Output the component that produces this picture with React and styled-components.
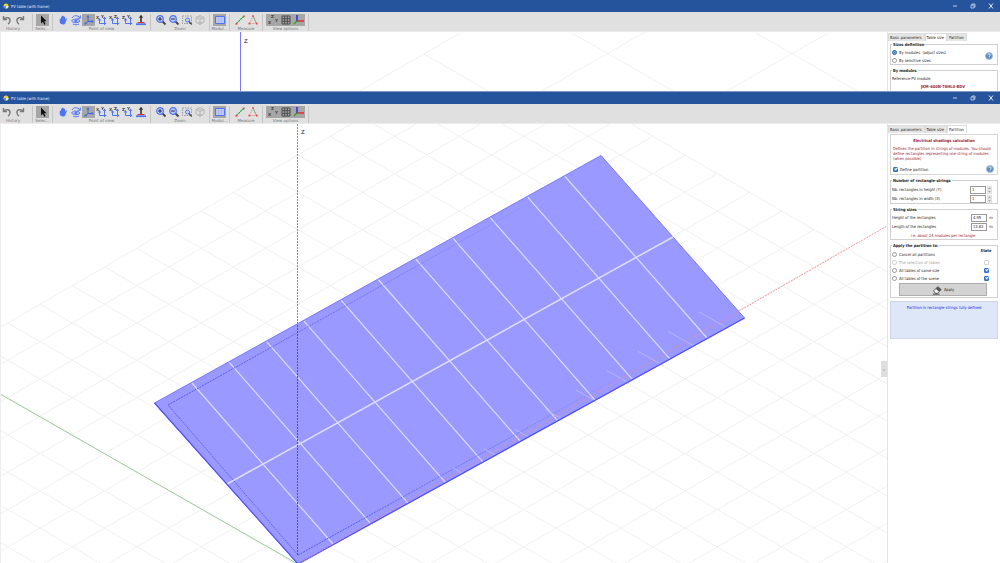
import React from "react";
import styled, { createGlobalStyle } from "styled-components";

const GlobalStyle = createGlobalStyle`
  * { box-sizing: border-box; }
  html, body, #root { height: 100%; }
  body {
    margin: 0;
    background: #fff;
    color: #222;
    font: 4px/5px "DejaVu Sans Condensed", "Liberation Sans", sans-serif;
    text-rendering: geometricPrecision;
  }
  button, input { font: inherit; color: inherit; }
`;

const Desktop = styled.main`
  display: flex;
  flex-direction: column;
  min-height: 100vh;
`;

const Window = styled.section`
  display: flex;
  flex-direction: column;
  flex: ${(p) => (p.$fill ? "1 0 auto" : "none")};
  border-top: ${(p) => (p.$fill ? "1px solid #7f9ac6" : "0")};
`;

const TitleBar = styled.header`
  display: flex;
  align-items: center;
  gap: 2px;
  height: 12px;
  padding: 0 4px 0 3px;
  background: #26549c;
  color: #e6eefb;
`;

const Title = styled.h1`
  flex: 1;
  margin: 0;
  font-size: 4px;
  font-weight: 400;
  line-height: 5px;
`;

const WindowButtons = styled.div`
  display: flex;
  gap: 8px;
`;

const WindowButton = styled.button`
  width: 10px;
  height: 10px;
  padding: 2px;
  border: 0;
  background: none;
  color: #dfe8f8;
  svg { display: block; }
`;

const Toolbar = styled.div`
  display: flex;
  align-items: flex-end;
  height: 20px;
  background: #e0e0e0;
  border-bottom: 1px solid #ececec;
`;

const ToolGroup = styled.div`
  display: flex;
  flex-direction: column;
  align-items: center;
  padding: ${(p) => (p.$flush ? "0 6px 0 0" : "0 3px")};
  border-right: 1px solid #c6c6c6;
  color: #777;
  font-family: "DejaVu Sans", "Liberation Sans", sans-serif;
  white-space: nowrap;
`;

const ToolRow = styled.div`
  display: flex;
`;

const ToolLabel = styled.span`
  width: 0;
  display: flex;
  justify-content: center;
`;

const ToolButton = styled.button`
  width: 13px;
  height: 12px;
  padding: 0;
  border: 0;
  background: ${(p) => (p.$on ? "#a6a6a6" : "transparent")};
  svg { display: block; margin: 0 auto; }
`;

const Body = styled.div`
  display: flex;
  flex: 1;
  min-height: 0;
`;

const Viewport = styled.div`
  position: relative;
  flex: 1;
  min-width: 0;
  overflow: hidden;
  border-left: 1px solid #eee;
`;

const Scene = styled.svg`
  position: absolute;
  inset: 0 0 0 -1px;
  width: calc(100% + 1px);
  height: 100%;
`;

const Splitter = styled.button`
  position: absolute;
  right: 0;
  top: 54%;
  width: 6px;
  height: 16px;
  padding: 0;
  border: 0;
  background: #dedede;
  color: #888;
  line-height: 5px;
`;

const Sidebar = styled.aside`
  width: 113px;
  border-left: 1px solid #e4e4e4;
  padding: 1px 2px 0 0;
`;

const Tabs = styled.div`
  display: flex;
  height: 8px;
`;

const Tab = styled.button`
  padding: 0 2px 0 1px;
  border: 1px solid #dcdcdc;
  border-bottom: 0;
  background: ${(p) => (p.$active ? "#fff" : "#e6e6e6")};
  white-space: nowrap;
  line-height: 5px;
`;

const Page = styled.div`
  display: flex;
  flex-direction: column;
  gap: 3px;
  padding: 1px 0 0 2px;
`;

const Card = styled.div`
  height: 41px;
  padding: 3px 2px 0;
  border: 1px solid #d6d6d6;
  color: #a01c2c;
`;

const CardTitle = styled.h2`
  margin: 0 0 3px;
  font-size: 4px;
  line-height: 5px;
  text-align: center;
`;

const CardText = styled.p`
  margin: 0 0 3px;
`;

const Group = styled.fieldset`
  min-width: 0;
  margin: 0;
  padding: ${(p) => p.$top || 1}px 3px 0 1px;
  border: 1px solid #d0d0d0;
  border-bottom-width: ${(p) => (p.$open ? 0 : 1)}px;
`;

const Legend = styled.legend`
  height: 5px;
  padding: 0 1px;
  color: #222;
  font-weight: 700;
`;

const Row = styled.div`
  display: flex;
  align-items: center;
  justify-content: ${(p) => (p.$center ? "center" : "space-between")};
  height: ${(p) => p.$h || 9}px;
  color: ${(p) => (p.$red ? "#a01c2c" : "inherit")};
  font-weight: ${(p) => (p.$bold ? 700 : 400)};
`;

const Split = styled.div`
  display: flex;
  align-items: ${(p) => (p.$middle ? "center" : "flex-start")};
  justify-content: space-between;
`;

const Choice = styled.label`
  display: flex;
  align-items: center;
  gap: 2px;
  height: ${(p) => p.$h || 8}px;
  color: ${(p) => (p.$off ? "#a4a4a4" : "#222")};
`;

const Radio = styled.input`
  appearance: none;
  width: 5px;
  height: 5px;
  margin: 0;
  border: 1px solid #999;
  border-radius: 50%;
  background: #fff;
  &:checked { border-color: #2b68b5; background: #2b68b5; box-shadow: inset 0 0 0 1px #8db4e2; }
  &:disabled { border-color: #ccc; }
`;

const Check = styled.input`
  appearance: none;
  position: relative;
  width: 5px;
  height: 5px;
  margin: 0;
  border: 1px solid #aaa;
  border-radius: 1px;
  background: #fff;
  &:checked { border-color: #2d6fca; background: #4f8ad8; }
  &:checked::before {
    content: "";
    position: absolute;
    left: 1px;
    top: 0;
    width: 1px;
    height: 2px;
    border: solid #fff;
    border-width: 0 1px 1px 0;
    box-sizing: content-box;
    transform: translateY(-1px) rotate(45deg);
  }
  &:disabled { border-color: #d4d4d4; }
`;

const States = styled.div`
  display: flex;
  flex-direction: column;
  align-items: center;
  width: 16px;
  margin-top: -2px;
`;

const StateTitle = styled.div`
  height: 10px;
  color: #222;
  font-weight: 700;
`;

const StateCell = styled.div`
  display: flex;
  align-items: center;
  height: 8px;
`;

const Field = styled.span`
  display: flex;
  align-items: center;
  gap: 1px;
`;

const NumberBox = styled.input`
  width: 16px;
  height: 8px;
  padding: 0 1px;
  border: 1px solid #999;
  background: #fff;
  line-height: 5px;
`;

const Unit = styled.span`
  width: 6px;
  text-align: center;
`;

const Spin = styled.span`
  display: flex;
  flex-direction: column;
  width: 5px;
  margin-right: 2px;
`;

const SpinButton = styled.button`
  height: 4px;
  padding: 0;
  border: 1px solid #e2e2e2;
  background: #f4f4f4;
  svg { display: block; margin: 0 auto; }
`;

const ApplyButton = styled.button`
  display: flex;
  align-items: center;
  justify-content: center;
  gap: 2px;
  width: calc(100% - 14px);
  height: 13px;
  margin: 1px 7px;
  padding: 0;
  border: 1px solid #adadad;
  background: #d3d3d3;
`;

const Notice = styled.output`
  display: block;
  height: 38px;
  padding-top: 3px;
  border: 1px solid #ccd6e8;
  background: #dde7f8;
  color: #2222dd;
  text-align: center;
`;

const HelpButton = styled.button`
  width: 10px;
  height: 10px;
  padding: 1px;
  border: 0;
  background: none;
  svg { display: block; }
`;

const Icon = ({ children, size = 12 }) => (
  <svg width={size} height={size} viewBox="0 0 12 12" fill="none" aria-hidden="true">
    {children}
  </svg>
);

const BLUE = "#4f74f2";

const viewCorners = (
  <g fill={BLUE}>
    <path d="M3.500 5.500v4h5v-5" fill="none" stroke={BLUE} />
    <path d="M1.800 6.500L3.500 4l1.700 2.500zM6.800 5L8.500 2.500 10.200 5zM8 7.800l2.500 1.700L8 11.200z" />
  </g>
);
const letters = (a, b) => (
  <g fill="#444" fontSize="4" fontWeight="700">
    <text x="0" y="5">{a}</text>
    <text x="5" y="4">{b}</text>
  </g>
);

const icons = {
  undo: <path d="M2.500 2v3.500H6M2.800 5.200C5 2.500 9.500 3.500 9 7c-.2 1.500-1 2.500-2 3" stroke="#777" strokeWidth="1.400" />,
  redo: <path d="M9.500 2v3.500H6M9.200 5.200C7 2.500 2.500 3.500 3 7c.2 1.500 1 2.500 2 3" stroke="#777" strokeWidth="1.400" />,
  select: <path d="M4 1.500v8l1.900-1.700 1.300 2.900 1.300-.6-1.300-2.800h2.400z" fill="#111" />,
  hand: <path d="M4 6V3c0-.8 1-.8 1 0V2c0-.8 1-.8 1 0v.5c0-.8 1-.8 1 0V3c0-.7 1-.7 1 0v2.500l1-1c.7-.4 1 .2.700.8L8.500 8.500C8 10 7.500 10.500 6.200 10.500 4 10.500 3 9.500 2.700 8V5c0-.8 1.300-.8 1.300 0z" fill={BLUE} />,
  orbit: (
    <g stroke={BLUE}>
      <path d="M2 4C3.500 1 8 1 9.800 3.800M10.300 1.500v2.800H7.500M3 10c1.500 1 4 1 6 0" />
      <path d="M1.500 7c2-2.600 6.500-2.600 8.500 0-2 2.300-6.500 2.300-8.500 0z" fill="#c5d0fa" />
      <circle cx="5.800" cy="7" r="1" fill={BLUE} />
    </g>
  ),
  axes: (
    <g fill="#3c63ee">
      <path d="M5 3v4.500h4.500M5 7.500L2.500 9.800" fill="none" stroke="#3c63ee" />
      <path d="M3.500 3.500L5 1l1.500 2.500zM8.500 6L11 7.500 8.500 9zM1.200 10.800l.8-2.800 2 2z" />
    </g>
  ),
  xy: <>{viewCorners}{letters("X", "Y")}</>,
  xz: <>{viewCorners}{letters("X", "Z")}</>,
  zy: <>{viewCorners}{letters("Z", "Y")}</>,
  ground: (
    <>
      <path d="M6 8V3" stroke="#333" strokeWidth="1.600" />
      <path d="M6 .8L3.800 3.800h4.400z" fill="#333" />
      <path d="M2.500 8.500h7" stroke="#d33" />
      <path d="M1 10.200h10" stroke={BLUE} strokeWidth="1.800" />
    </>
  ),
  zoomIn: (
    <>
      <path d="M7 7l3.500 3.500" stroke="#444" strokeWidth="1.800" />
      <circle cx="5" cy="5" r="3.300" fill="#b9c8fb" stroke={BLUE} strokeWidth="1.200" />
      <path d="M3.200 5h3.600M5 3.200v3.600" stroke="#224" />
    </>
  ),
  zoomOut: (
    <>
      <path d="M7 7l3.500 3.500" stroke="#444" strokeWidth="1.800" />
      <circle cx="5" cy="5" r="3.300" fill="#b9c8fb" stroke={BLUE} strokeWidth="1.200" />
      <path d="M3.200 5h3.600" stroke="#224" />
    </>
  ),
  zoomArea: (
    <>
      <path d="M1.500 2h9v7.500h-9z" stroke="#888" strokeWidth=".8" strokeDasharray="1.500 1" />
      <circle cx="6.500" cy="6" r="2" fill="#cdd8fc" stroke={BLUE} />
      <path d="M8 7.500l2.800 3" stroke="#444" strokeWidth="1.200" />
    </>
  ),
  cube: <path d="M6 1.500l4 2v4.500l-4 2.500-4-2.500V3.500zM2 3.500l4 2 4-2M6 5.500v5M4 2.500l4 2M4 9l2-1 2 1" stroke="#b0b0b0" strokeWidth=".9" />,
  module: (
    <>
      <path d="M1.500 2.500h9v7h-9z" fill="#c3cdf8" stroke={BLUE} />
      <path d="M2 4.800h8M2 7.200h8M4.500 3v6M7.500 3v6" stroke="#a3b2f2" strokeWidth=".6" />
    </>
  ),
  distance: (
    <>
      <path d="M2.500 9.500l7-7" stroke="#2a4" strokeWidth="1.200" strokeDasharray="2 .7" />
      <path d="M1.500 9h1.700v1.700H1.500zM9 1.500h1.700v1.700H9z" fill="#e44" />
    </>
  ),
  angle: (
    <>
      <path d="M6 2L2.500 9.500h7z" stroke="#e88" strokeWidth=".8" strokeDasharray="1.500 .7" />
      <path d="M6 2l3.500 7.500" stroke="#5b7" strokeWidth=".8" />
      <path d="M5.200 1.200h1.600v1.600H5.200zM1.500 8.800h1.700v1.600H1.500zM9 8.800h1.700v1.600H9z" fill="#e44" />
    </>
  ),
  labels: (
    <g fill="#444" fontSize="4" fontWeight="700">
      <text x="4" y="4">Z</text>
      <text x="1" y="10">X</text>
      <text x="8" y="8">Y</text>
    </g>
  ),
  grid: <path d="M2 2h8v8H2zM4.700 2v8M7.300 2v8M2 4.700h8M2 7.300h8" stroke="#444" strokeWidth=".9" />,
  triad: (
    <>
      <path d="M4 1v6" stroke="#22e" strokeWidth="1.400" />
      <path d="M4 7h7" stroke="#e22" strokeWidth="1.400" />
      <path d="M4 7l-3 3" stroke="#2a2" strokeWidth="1.400" />
    </>
  ),
};

const toolGroups = [
  { label: "History", flush: true, tools: [["undo", "Undo"], ["redo", "Redo"]] },
  { label: "Selec...", tools: [["select", "Select", true]] },
  {
    label: "Point of view",
    tools: [
      ["hand", "Pan"], ["orbit", "Orbit"], ["axes", "Perspective", true], ["xy", "Top view"],
      ["xz", "Front view"], ["zy", "Side view"], ["ground", "Ground view"],
    ],
  },
  { label: "Zoom", tools: [["zoomIn", "Zoom in"], ["zoomOut", "Zoom out"], ["zoomArea", "Zoom area"], ["cube", "Fit scene"]] },
  { label: "Modul...", tools: [["module", "Modules", true]] },
  { label: "Measure", tools: [["distance", "Distance"], ["angle", "Angle"]] },
  { label: "View options", tools: [["labels", "Axis labels", true], ["grid", "Grid", true], ["triad", "Axes", true]] },
];

const WindowHead = () => (
  <>
    <TitleBar>
      <Icon size={6}>
        <circle cx="6" cy="6" r="5" fill="#f0cf3c" />
        <path d="M6 6h5a5 5 0 0 1-5 5z" fill="#dfe8f8" />
        <path d="M1 6a5 5 0 0 0 5 5V6z" fill="#5d94d8" />
      </Icon>
      <Title>PV table (with frame)</Title>
      <WindowButtons>
        <WindowButton aria-label="Minimize"><Icon size={6}><path d="M2 6h8" stroke="currentColor" strokeWidth="1.600" /></Icon></WindowButton>
        <WindowButton aria-label="Restore"><Icon size={6}><path d="M2 4h6v6H2zM4 4V2h6v6H8" stroke="currentColor" strokeWidth="1.400" /></Icon></WindowButton>
        <WindowButton aria-label="Close"><Icon size={6}><path d="M2 1l8 10M10 1L2 11" stroke="currentColor" strokeWidth="2" /></Icon></WindowButton>
      </WindowButtons>
    </TitleBar>
    <Toolbar role="toolbar">
      {toolGroups.map((g) => (
        <ToolGroup key={g.label} $flush={g.flush}>
          <ToolRow>
            {g.tools.map(([icon, name, on]) => (
              <ToolButton key={icon} aria-label={name} aria-pressed={!!on} $on={on}>
                <Icon>{icons[icon]}</Icon>
              </ToolButton>
            ))}
          </ToolRow>
          <ToolLabel>{g.label}</ToolLabel>
        </ToolGroup>
      ))}
    </Toolbar>
  </>
);

const TabBar = ({ active }) => (
  <Tabs role="tablist">
    {["Basic parameters", "Table size", "Partition"].map((t) => (
      <Tab key={t} role="tab" aria-selected={t === active} $active={t === active}>{t}</Tab>
    ))}
  </Tabs>
);

const Help = () => (
  <HelpButton aria-label="Help">
    <svg width="8" height="8" viewBox="0 0 16 16" aria-hidden="true">
      <circle cx="8" cy="8" r="7" fill="#4f86c6" stroke="#a9bdd6" strokeWidth="2" />
      <path d="M5.500 6.300C5.500 3 10.500 3 10.500 6c0 2-2.500 2-2.500 4M8 11.200v1.600" fill="none" stroke="#fff" strokeWidth="1.800" />
    </svg>
  </HelpButton>
);

const Stepper = () => (
  <Spin>
    <SpinButton aria-label="Increase"><svg width="3" height="2" viewBox="0 0 6 4"><path d="M0 4l3-4 3 4z" fill="#aaa" /></svg></SpinButton>
    <SpinButton aria-label="Decrease"><svg width="3" height="2" viewBox="0 0 6 4"><path d="M0 0l3 4 3-4z" fill="#aaa" /></svg></SpinButton>
  </Spin>
);

/* Isometric ground grid: two families of parallels that start at the far corner. */
const APEX = [491.5, 43];
const STEP = [32.25, 18.66];
const node = (i, j) => `${APEX[0] + (i - j) * STEP[0]} ${APEX[1] + (i + j) * STEP[1]}`;
const groundPath = Array.from({ length: 34 }, (_, k) => `M${node(k, 0)}L${node(k, 34)}M${node(0, k)}L${node(34, k)}`).join("");
const seams = Array.from({ length: 11 }, (_, k) => `M${192 + k * 37.3} ${383 - k * 20.65}L${333 + k * 37.4} ${544 - k * 20.6}`).join("");
const ticks = Array.from({ length: 9 }, (_, k) => ({
  x: 699 - k * 30.75,
  y: 312 + k * 19.5,
  len: k < 3 ? 26 : 26 - k * 2,
}));
const TABLE = "154.500,403 601,155.500 744.500,318 298,564";

const TableScene = () => (
  <Scene viewBox="0 124 887 439" preserveAspectRatio="xMinYMin slice" fill="none" role="img" aria-label="3D view of the table">
    <defs>
      <linearGradient id="fade" gradientUnits="userSpaceOnUse" x1="168" y1="0" x2="560" y2="0">
        <stop offset=".1" stopColor="#5050ee" />
        <stop offset="1" stopColor="#5050ee" stopOpacity="0" />
      </linearGradient>
      <linearGradient id="fadeLow" gradientUnits="userSpaceOnUse" x1="298" y1="0" x2="650" y2="0">
        <stop offset=".1" stopColor="#5050ee" />
        <stop offset="1" stopColor="#5050ee" stopOpacity="0" />
      </linearGradient>
    </defs>
    <path d={groundPath} stroke="#f0f0f0" />
    <path d="M0 394L296 563" stroke="#9ccc9c" />
    <path d="M297.500 124V325" stroke="#7c7cf6" strokeDasharray="2 1" />
    <polygon points={TABLE} fill="#9999ff" stroke="#7a7afb" />
    <path d={seams} stroke="#dcdcff" strokeWidth="1.200" />
    <path d="M227 484L673 237" stroke="#dedeff" strokeWidth="1.500" />
    <path d="M298 555L168 405" stroke="#5c5cee" strokeWidth=".9" strokeDasharray="2 1" />
    <path d="M168 405L560 186" stroke="url(#fade)" strokeWidth=".9" strokeDasharray="2 1" />
    <path d="M298 555L650 360" stroke="url(#fadeLow)" strokeWidth=".9" strokeDasharray="2 1" />
    {ticks.map((t) => (
      <path key={t.x} d={`M${t.x} ${t.y}l${t.len} ${t.len * 0.56}`} stroke="#bcbcf8" strokeWidth=".8" />
    ))}
    <path d="M297.500 325V555" stroke="#4c4cdc" strokeDasharray="2 1" />
    <path d="M154.500 403L298 564L744.500 318" stroke="#5252fa" strokeWidth="1.200" />
    <path d="M298 564L739 311" stroke="#dc8cac" strokeDasharray="2 1" strokeWidth=".8" />
    <path d="M739 311L887 226" stroke="#f79a9a" strokeDasharray="2 1" />
    <text x="301" y="134" fill="#555" fontSize="6" fontFamily="Liberation Sans" fontWeight="700">Z</text>
  </Scene>
);

const TopScene = () => (
  <Scene viewBox="0 32 887 59" preserveAspectRatio="xMinYMin slice" fill="none" role="img" aria-label="3D view">
    <path d="M645 32L540 92M460 33L358 92M424 54L490 92M572 33L675 92M756 33L859 92M828 33L725 92" stroke="#f0f0f0" />
    <path d="M240.500 32V92" stroke="#7a7af8" />
    <text x="244" y="43" fill="#555" fontSize="6" fontFamily="Liberation Sans" fontWeight="700">Z</text>
  </Scene>
);

const applyTargets = [
  { label: "Cancel all partitions" },
  { label: "The selection of tables", off: true, state: false },
  { label: "All tables of same size", state: true },
  { label: "All tables of the scene", state: true },
];

export default function App() {
  return (
    <Desktop>
      <GlobalStyle />
      <Window>
        <WindowHead />
        <Body>
          <Viewport><TopScene /></Viewport>
          <Sidebar>
            <TabBar active="Table size" />
            <Page>
              <Group>
                <Legend>Sizes definition</Legend>
                <Split $middle>
                  <div>
                    <Choice><Radio type="radio" name="sizes" defaultChecked />By modules &nbsp;(adjust sizes)</Choice>
                    <Choice><Radio type="radio" name="sizes" />By sensitive sizes</Choice>
                  </div>
                  <Help />
                </Split>
              </Group>
              <Group $open>
                <Legend>By modules</Legend>
                <Row $h={8}>Reference PV module</Row>
                <Row $center $red $bold>JKM-600N-78HL4-BDV</Row>
              </Group>
            </Page>
          </Sidebar>
        </Body>
      </Window>

      <Window $fill>
        <WindowHead />
        <Body>
          <Viewport>
            <TableScene />
            <Splitter aria-label="Collapse panel">»</Splitter>
          </Viewport>
          <Sidebar>
            <TabBar active="Partition" />
            <Page>
              <Card>
                <CardTitle>Electrical shadings calculation</CardTitle>
                <CardText>
                  Defines the partition in strings of modules. You should define rectangles representing one string of modules (when possible)
                </CardText>
                <Split $middle>
                  <Choice $h={9}><Check type="checkbox" defaultChecked />Define partition</Choice>
                  <Help />
                </Split>
              </Card>
              <Group $top={2}>
                <Legend>Number of rectangle-strings</Legend>
                <Row>
                  <label htmlFor="nh">Nb. rectangles in height (Y)</label>
                  <Field><NumberBox id="nh" defaultValue="1" /><Stepper /></Field>
                </Row>
                <Row>
                  <label htmlFor="nw">Nb. rectangles in width (X)</label>
                  <Field><NumberBox id="nw" defaultValue="1" /><Stepper /></Field>
                </Row>
              </Group>
              <Group>
                <Legend>String sizes</Legend>
                <Row>
                  <label htmlFor="rh">Height of the rectangles</label>
                  <Field><NumberBox id="rh" defaultValue="4.95" /><Unit>m</Unit></Field>
                </Row>
                <Row>
                  <label htmlFor="rl">Length of the rectangles</label>
                  <Field><NumberBox id="rl" defaultValue="13.83" /><Unit>m</Unit></Field>
                </Row>
                <Row $h={8} $center $red>i.e. about 24 modules per rectangle</Row>
              </Group>
              <Group $top={2}>
                <Legend>Apply the partition to:</Legend>
                <Split>
                  <div>
                    {applyTargets.map((t) => (
                      <Choice key={t.label} $off={t.off}>
                        <Radio type="radio" name="target" disabled={t.off} />{t.label}
                      </Choice>
                    ))}
                  </div>
                  <States>
                    <StateTitle>State</StateTitle>
                    {applyTargets.slice(1).map((t) => (
                      <StateCell key={t.label}>
                        <Check type="checkbox" aria-label={`State: ${t.label}`} defaultChecked={t.state} disabled={t.off} />
                      </StateCell>
                    ))}
                  </States>
                </Split>
                <ApplyButton>
                  <Icon size={10}>
                    <path d="M2 7l5-5 4 3.500L6.500 10H4z" fill="#f4f4f4" stroke="#444" />
                    <path d="M4.500 4.500L8.500 8 11 5.500 7 2z" fill="#555" />
                    <path d="M1 11h8" stroke="#333" />
                  </Icon>
                  Apply
                </ApplyButton>
              </Group>
              <Notice>Partition in rectangle-strings fully defined</Notice>
            </Page>
          </Sidebar>
        </Body>
      </Window>
    </Desktop>
  );
}
